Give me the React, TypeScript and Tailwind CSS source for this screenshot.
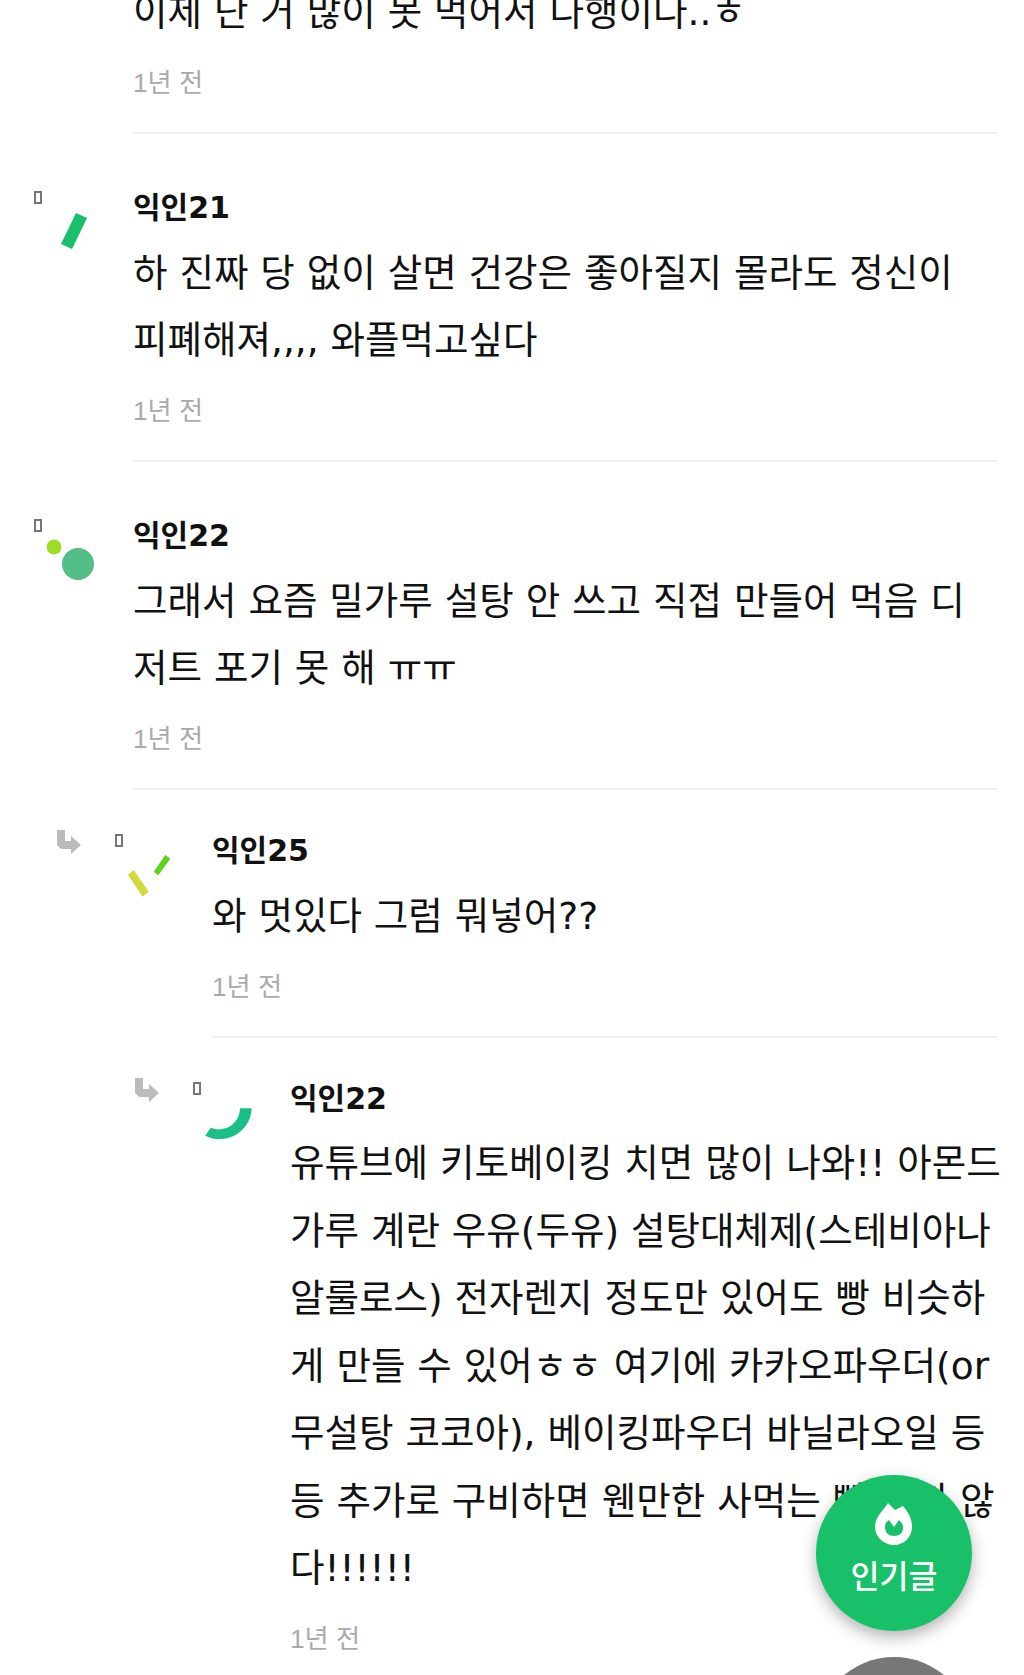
import React from "react";

const font = { fontFamily: '"DejaVu Sans", "Noto Sans CJK KR", sans-serif' };

function Tofu() {
  return <span className="block w-[8px] h-[13px] mt-[4px] border-2 border-[#777777] shrink-0" />;
}

function ReplyArrow() {
  return (
    <svg width="24" height="24" viewBox="0 0 24 24" className="shrink-0">
      <path d="M0 0h8v11h6V6l10 9-10 9v-5H4l-4-4z" fill="#bbbbbb" />
    </svg>
  );
}

function AvatarShapes({ kind }: { kind: number }) {
  return (
    <svg width="70" height="60" viewBox="0 0 70 60" className="block">
      {kind === 0 && <polygon points="42,9 53,14 38,45 27,40" fill="#19c06a" />}
      {kind === 1 && (
        <>
          <circle cx="20" cy="15" r="7.5" fill="#9edc28" />
          <circle cx="44" cy="32" r="16" fill="#52bd84" />
        </>
      )}
      {kind === 2 && (
        <>
          <polygon points="18.7,23 33.7,44.7 27.7,49.7 13,28" fill="#d1d93c" />
          <polygon points="50.3,8 55.3,11.7 43.3,28.3 38.7,24.7" fill="#5cd31e" />
        </>
      )}
      {kind === 3 && (
        <path d="M58.7 13.3 A32 32 0 0 1 12.3 40.7 L17.7 32.7 A21 21 0 0 0 47 13.3 Z" fill="#19bf85" />
      )}
    </svg>
  );
}

type C = { name: string; lines: string[]; depth: number; kind: number };

const comments: C[] = [
  { name: "익인21", depth: 0, kind: 0, lines: ["하 진짜 당 없이 살면 건강은 좋아질지 몰라도 정신이", "피폐해져,,,, 와플먹고싶다"] },
  { name: "익인22", depth: 0, kind: 1, lines: ["그래서 요즘 밀가루 설탕 안 쓰고 직접 만들어 먹음 디", "저트 포기 못 해 ㅠㅠ"] },
  { name: "익인25", depth: 1, kind: 2, lines: ["와 멋있다 그럼 뭐넣어??"] },
  {
    name: "익인22",
    depth: 2,
    kind: 3,
    lines: [
      "유튜브에 키토베이킹 치면 많이 나와!! 아몬드",
      "가루 계란 우유(두유) 설탕대체제(스테비아나",
      "알룰로스) 전자렌지 정도만 있어도 빵 비슷하",
      "게 만들 수 있어ㅎㅎ 여기에 카카오파우더(or",
      "무설탕 코코아), 베이킹파우더 바닐라오일 등",
      "등 추가로 구비하면 웬만한 사먹는 빵 못지 않",
      "다!!!!!!",
    ],
  },
];

function Meta() {
  return <div className="mt-[18.5px] h-[36px] leading-[36px] text-[26.25px] text-[#aaaaaa] [font-family:'Liberation_Sans','Noto_Sans_CJK_KR',sans-serif]">1년 전</div>;
}

function Comment({ c }: { c: C }) {
  const pad = c.depth === 0 ? "pt-[53px]" : "pt-[40px]";
  const indent = c.depth === 0 ? "pl-[34px]" : c.depth === 1 ? "pl-[57px]" : "pl-[135px]";
  const leftW = c.depth === 0 ? "w-[99px]" : "w-[155px]";
  return (
    <div className={`flex ${indent}`}>
      <div className={`${leftW} shrink-0 ${pad}`}>
        <div className="flex items-start">
          {c.depth > 0 && (
            <div className="w-[58px] shrink-0">
              <ReplyArrow />
            </div>
          )}
          <div className="flex flex-col">
            <Tofu />
            <AvatarShapes kind={c.kind} />
          </div>
        </div>
      </div>
      <div className={`flex-1 min-w-0 mr-[26px] border-b-2 border-[#f0f0f0] pb-[31px] ${pad}`}>
        <div className="mt-[1px] h-[40px] leading-[40px] text-[30px] font-bold text-[#111111]">{c.name}</div>
        <div className="mt-[11.5px] text-[37.5px] leading-[67.5px] text-[#111111]">
          {c.lines.map((l, i) => (
            <div key={i} className="whitespace-nowrap">{l}</div>
          ))}
        </div>
        <Meta />
      </div>
    </div>
  );
}

export default function App() {
  return (
    <div className="relative w-[1024px] h-[1675px] overflow-hidden bg-white" style={font}>
      <div className="-mt-[21px]">
        <div className="ml-[133px] mr-[26px] border-b-2 border-[#f0f0f0] pb-[31px]">
          <div className="text-[37.5px] leading-[67.5px] text-[#111111] whitespace-nowrap">이제 단 거 많이 못 먹어서 다행이다..ㅎ</div>
          <Meta />
        </div>
        {comments.map((c, i) => (
          <Comment key={i} c={c} />
        ))}
      </div>
      <div className="absolute left-[816px] top-[1475px] w-[156px] h-[156px] rounded-full bg-[#19c06a] shadow-[0_6px_16px_rgba(0,0,0,0.3)] flex flex-col items-center text-white">
        <svg width="38" height="42" viewBox="0 0 38 42" className="mt-[28px]">
          <path
            fillRule="evenodd"
            d="M13 0 L20 7 L28 3 C33 9 37 15 37 24 C37 34 29 42 19 42 C9 42 0 34 0 24 C0 14 8 8 13 0 Z M10 24 C10 30 14 33 19 33 C25 33 29 29 28 23 C27 20 25 18 24 17 L19 24 L14 17 C11 19 10 21 10 24 Z"
            fill="#ffffff"
          />
        </svg>
        <div className="mt-[12px] text-[31.5px] leading-[40px] font-medium">인기글</div>
      </div>
      <div className="absolute left-[816px] top-[1657px] w-[156px] h-[156px] rounded-full bg-[#777777]" />
    </div>
  );
}
